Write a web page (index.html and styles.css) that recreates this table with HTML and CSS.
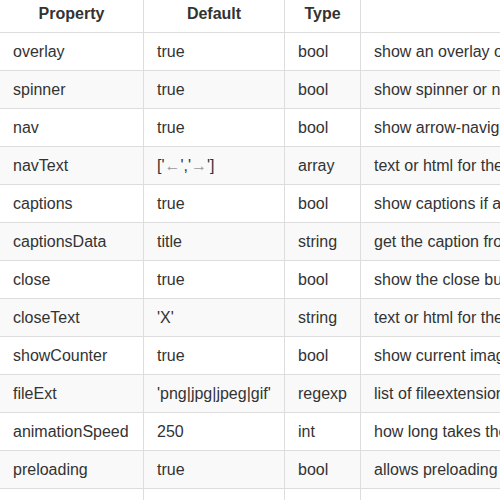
FILE: index.html
```html
<!DOCTYPE html>
<html>
<head>
<meta charset="utf-8">
<link rel="stylesheet" href="styles.css">
</head>
<body>
<table class="opts">
  <colgroup>
    <col class="c1"><col class="c2"><col class="c3"><col class="c4">
  </colgroup>
  <thead>
    <tr><th>Property</th><th>Default</th><th>Type</th><th>Description</th></tr>
  </thead>
  <tbody>
    <tr><td>overlay</td><td>true</td><td>bool</td><td>show an overlay or not</td></tr>
    <tr><td>spinner</td><td>true</td><td>bool</td><td>show spinner or not</td></tr>
    <tr><td>nav</td><td>true</td><td>bool</td><td>show arrow-navigation</td></tr>
    <tr><td>navText</td><td>['<span class="arr">←</span>','<span class="arr">→</span>']</td><td>array</td><td>text or html for the navigation arrows</td></tr>
    <tr><td>captions</td><td>true</td><td>bool</td><td>show captions if available or not</td></tr>
    <tr><td>captionsData</td><td>title</td><td>string</td><td>get the caption from given attribute</td></tr>
    <tr><td>close</td><td>true</td><td>bool</td><td>show the close button or not</td></tr>
    <tr><td>closeText</td><td>'X'</td><td>string</td><td>text or html for the close button</td></tr>
    <tr><td>showCounter</td><td>true</td><td>bool</td><td>show current image index or not</td></tr>
    <tr><td>fileExt</td><td>'png|jpg|jpeg|gif'</td><td>regexp</td><td>list of fileextensions the plugin works with</td></tr>
    <tr><td>animationSpeed</td><td>250</td><td>int</td><td>how long takes the slide animation</td></tr>
    <tr><td>preloading</td><td>true</td><td>bool</td><td>allows preloading next und previous images</td></tr>
    <tr><td>enableKeyboard</td><td>true</td><td>bool</td><td>allow keyboard arrow navigation and close with ESC key</td></tr>
  </tbody>
</table>
</body>
</html>
```
FILE: styles.css
```css
html, body {
  margin: 0;
  padding: 0;
  overflow: hidden;
  background: #fff;
}
.opts {
  border-collapse: separate;
  border-spacing: 0;
  table-layout: fixed;
  width: 800px;
  font-family: "Liberation Sans", Arial, sans-serif;
  font-size: 16px;
  line-height: 21px;
  color: #333;
}
.c1 { width: 144px; }
.c2 { width: 141px; }
.c3 { width: 76px; }
.c4 { width: 439px; }
.opts th, .opts td {
  padding: 8px 13px;
  border-right: 1px solid #ddd;
  border-bottom: 1px solid #ddd;
  white-space: nowrap;
  overflow: hidden;
  text-align: left;
  vertical-align: top;
}
.opts th {
  padding-top: 3px;
  font-weight: bold;
  text-align: center;
}
.opts tbody tr:nth-child(even) td {
  background: #f9f9f9;
}
.arr {
  color: #999;
}
```
